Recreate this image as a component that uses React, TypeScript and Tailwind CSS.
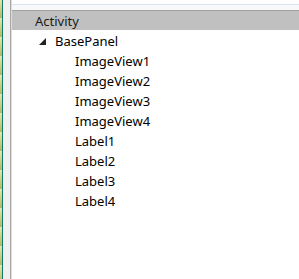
export default function App() {
  const items = ['ImageView1', 'ImageView2', 'ImageView3', 'ImageView4', 'Label1', 'Label2', 'Label3', 'Label4'];
  const tiles = Array.from({ length: 15 });

  return (
    <div className="flex h-[279px] w-[299px] overflow-hidden bg-white" style={{ fontFamily: '"Noto Sans", sans-serif' }}>
      {/* toolbox strip on the left */}
      <div className="flex w-[2px] flex-col">
        {tiles.map((_, i) => (
          <div key={i} className="h-[19px] shrink-0 border-b border-[#dde8c8] bg-gradient-to-b from-[#e4e2a8] to-[#b8b660]" />
        ))}
      </div>
      <div className="w-px bg-[#0f7d6a]" />
      <div className="w-[7px] bg-[#f0f0f0]" />
      <div className="w-px bg-[#a8a8a8]" />
      <div className="w-px bg-[#dcdcdc]" />

      <div className="flex flex-1 flex-col text-[13px] leading-none">
        <div className="h-[4px] bg-white" />
        <div className="h-px bg-[#d8e4f0]" />
        <div className="h-[5px] bg-[#f8f9fa]" />
        <div className="h-px bg-[#a0a0a0]" />
        <div className="flex h-[19px] items-center bg-[#c0c0c0] pl-[23px] pt-px text-[#1a1a1a]">Activity</div>
        <div className="flex h-[20px] items-center pl-[27px] pt-[2px] text-black">
          <svg width="7" height="7" viewBox="0 0 7 7" className="mr-[9px]">
            <polygon points="7,0 7,7 0,7" fill="#222" />
          </svg>
          BasePanel
        </div>
        {items.map(t => (
          <div key={t} className="flex h-[20px] items-center pl-[63px] pt-[2px] text-black">{t}</div>
        ))}
      </div>
    </div>
  );
}
